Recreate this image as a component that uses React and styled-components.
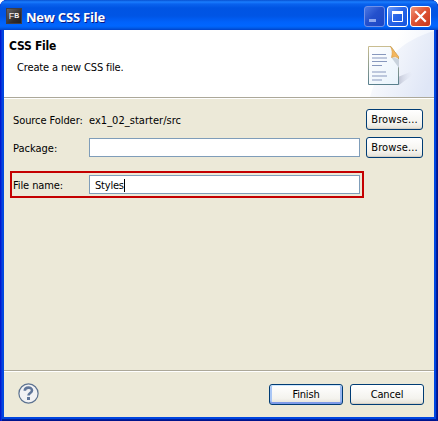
import React from "react";
import styled, { createGlobalStyle } from "styled-components";

const GlobalStyle = createGlobalStyle`
  * { box-sizing: border-box; }
  body { margin: 0; background: #fff; overflow: hidden; }
`;

const Window = styled.div`
  width: 438px;
  height: 421px;
  display: flex;
  flex-direction: column;
  padding: 0 4px 4px;
  border-radius: 7px 7px 0 0;
  overflow: hidden;
  background: #0046e0;
  box-shadow: inset 1px 0 #0019cf, inset 2px 0 #0831d9, inset -1px 0 #00138c,
    inset -2px 0 #001ea0, inset 0 -1px #00138c, inset 0 -2px #001ea0;
  font-family: "DejaVu Sans Condensed", "DejaVu Sans", sans-serif;
  font-stretch: condensed;
  font-size: 11px;
  line-height: 14px;
  color: #000;
`;

const TitleBar = styled.header`
  height: 30px;
  flex: none;
  margin: 0 -4px;
  padding: 3px 7px 0 6px;
  display: flex;
  align-items: center;
  background: linear-gradient(#0850d0 0, #1a7dff 2px, #0a62ee 4px, #0054e3 8px,
    #0055e5 16px, #0062fb 22px, #0066ff 26px, #005be8 28px, #0042c8 30px);
`;

const AppIcon = styled.span`
  width: 16px;
  height: 16px;
  margin-top: -2px;
  display: flex;
  align-items: center;
  justify-content: center;
  background: linear-gradient(135deg, #696565, #302c2c 65%, #242121);
  border: 1px solid #413d42;
  color: #f4f0f0;
  font: 9px/14px "Liberation Sans", sans-serif;

  small { font-size: 7px; font-weight: bold; padding-top: 1px; }
`;

const Title = styled.h1`
  flex: 1;
  margin: 0 0 0 4px;
  font: bold 13px/16px "Open Sans", sans-serif;
  letter-spacing: ${(p) => p.$spacing}px;
  color: #fff;
  text-shadow: 1px 1px #0a1883;
`;

const Controls = styled.div`
  display: flex;
  gap: 2px;
`;

const controlFills = {
  min: "linear-gradient(135deg, #4a78e4, #2450cc 45%, #1c46c4)",
  max: "linear-gradient(135deg, #6f9cf8, #2865e8 45%, #1654dd)",
  close: "linear-gradient(135deg, #f09578, #df5434 45%, #c8381c)",
};

const Control = styled.button`
  width: 21px;
  height: 21px;
  padding: 0;
  border: 1px solid ${(p) => (p.$kind === "min" ? "#6f90e8" : "#fff")};
  border-radius: 3px;
  background: ${(p) => controlFills[p.$kind]};

  svg { display: block; }
`;

const Banner = styled.section`
  height: 69px;
  flex: none;
  display: flex;
  justify-content: space-between;
  padding-left: 5px;
  background: #fff;
  border-bottom: 1px solid #fff;
  box-shadow: inset 0 -1px #aca899;
`;

const BannerText = styled.div`
  padding-top: 8px;
`;

const Heading = styled.h2`
  margin: 0;
  font-size: 12px;
  line-height: 16px;
  letter-spacing: ${(p) => p.$spacing}px;
`;

const Message = styled.p`
  margin: 7px 0 0 8px;
  letter-spacing: ${(p) => p.$spacing}px;
`;

const Form = styled.main`
  flex: 1;
  display: flex;
  flex-direction: column;
  padding: 10px 11px 0 6px;
  background: #ece9d8;
`;

const Row = styled.div`
  height: ${(p) => (p.$marked ? 27 : 21)}px;
  width: ${(p) => (p.$marked ? "354px" : "auto")};
  margin-bottom: ${(p) => p.$gap || 0}px;
  display: flex;
  align-items: center;
  border: ${(p) => (p.$marked ? "2px solid #c40000" : "0")};
  padding-left: ${(p) => (p.$marked ? 1 : 3)}px;
`;

const Label = styled.label`
  width: 76px;
  flex: none;
  padding-top: 3px;
  white-space: nowrap;
  letter-spacing: ${(p) => p.$spacing}px;
`;

const Value = styled.span`
  flex: 1;
  padding-top: 3px;
  letter-spacing: ${(p) => p.$spacing}px;
`;

const Field = styled.div`
  width: 271px;
  height: 19px;
  flex: none;
  display: flex;
  align-items: center;
  padding: 2px 0 0 5px;
  border: 1px solid #7f9db9;
  background: #fff;
  letter-spacing: ${(p) => p.$spacing || 0}px;
`;

const Caret = styled.i`
  width: 1px;
  height: 13px;
  margin-top: -1px;
  background: #000;
`;

const Button = styled.button`
  width: ${(p) => p.$width}px;
  height: 21px;
  flex: none;
  padding: 1px 0 0;
  margin-left: ${(p) => (p.$width < 60 ? 6 : 0)}px;
  border: 1px solid #003c74;
  border-radius: 3px;
  background: linear-gradient(#fff, #f4f3ee 70%, #e4e0d5);
  box-shadow: ${(p) =>
    p.$primary
      ? "inset 0 1px #cee7ff, inset 0 -2px #7f9be8, inset 2px 0 #a9c6f5, inset -2px 0 #9ab8f0"
      : "inset 0 -1px #d6d0c5"};
  color: #000;
  font: inherit;
  line-height: 18px;
  letter-spacing: ${(p) => p.$spacing}px;
`;

const Footer = styled.footer`
  height: 47px;
  flex: none;
  display: flex;
  align-items: center;
  gap: 7px;
  padding: 1px 10px 0 14px;
  border-top: 1px solid #aca899;
  box-shadow: inset 0 1px #fff;
  background: #ece9d8;
`;

const Help = styled.span`
  flex: 1;
  height: 23px;

  svg { display: block; }
`;

function ControlIcon({ kind }) {
  return (
    <svg width="19" height="19" viewBox="0 0 19 19" fill="none">
      {kind === "min" && <path d="M4 12h7v3H4z" fill="#8ea8ee" />}
      {kind === "max" && (
        <>
          <path d="M4.5 5.5h10v9h-10z" stroke="#fff" />
          <path d="M4 4h11v3H4z" fill="#fff" />
        </>
      )}
      {kind === "close" && (
        <path d="M5 5l9 9M14 5l-9 9" stroke="#fff" strokeWidth="2.2" strokeLinecap="square" />
      )}
    </svg>
  );
}

function DocumentArt() {
  return (
    <svg width="76" height="67" viewBox="0 0 76 67">
      <defs>
        <linearGradient id="swoosh" x1="0" y1="0.2" x2="1" y2="0.6">
          <stop offset="0" stopColor="#fff" />
          <stop offset="1" stopColor="#dfe6f6" />
        </linearGradient>
        <linearGradient id="sky" x1="0" y1="0" x2="1" y2="0.3">
          <stop offset="0.5" stopColor="#fff" />
          <stop offset="1" stopColor="#f0f4fc" />
        </linearGradient>
        <linearGradient id="paper" x1="0" y1="0" x2="1" y2="1">
          <stop offset="0" stopColor="#fff" />
          <stop offset="1" stopColor="#e8f3fc" />
        </linearGradient>
        <linearGradient id="edge" x1="0" y1="0" x2="0" y2="1">
          <stop offset="0" stopColor="#c9bd91" />
          <stop offset="1" stopColor="#587f8d" />
        </linearGradient>
        <linearGradient id="shade">
          <stop offset="0" stopColor="#bfc3d3" />
          <stop offset="1" stopColor="#dfe5f4" stopOpacity="0" />
        </linearGradient>
      </defs>
      <path d="M0 0h76v67H0z" fill="url(#sky)" />
      <path d="M12 67C22 30 45 10 76 1v66z" fill="url(#swoosh)" />
      <path d="M40 55V47l12-5q6 1 0 5l-11 8z" fill="url(#shade)" />
      <path d="M10.500 16.500H33l7.500 11v27h-30z" fill="url(#paper)" stroke="url(#edge)" />
      <path d="M33 27l8 2v9z" fill="#c9d3dd" />
      <path d="M32.500 16.500l8 10v2c-2-2-4-2-7-1 1-4 1-8-1-11z" fill="#f3b65e" stroke="#d89a42" strokeWidth=".6" />
      <path d="M14 24.500h14M14 28h15M14 31.500h15M14 35.500h10M14 42h14M14 46h15M14 50h10" stroke="#8798bd" strokeWidth="1.200" />
    </svg>
  );
}

export default function App() {
  return (
    <>
      <GlobalStyle />
      <Window>
        <TitleBar>
          <AppIcon>F<small>B</small></AppIcon>
          <Title $spacing={-0.22}>New CSS File</Title>
          <Controls>
            {["min", "max", "close"].map((kind) => (
              <Control key={kind} $kind={kind} aria-label={kind}>
                <ControlIcon kind={kind} />
              </Control>
            ))}
          </Controls>
        </TitleBar>
        <Banner>
          <BannerText>
            <Heading $spacing={-0.25}>CSS File</Heading>
            <Message $spacing={-0.14}>Create a new CSS file.</Message>
          </BannerText>
          <DocumentArt />
        </Banner>
        <Form>
          <Row $gap={7}>
            <Label $spacing={-0.08}>Source Folder:</Label>
            <Value $spacing={0.03}>ex1_02_starter/src</Value>
            <Button $width={57} $spacing={0.12}>Browse...</Button>
          </Row>
          <Row $gap={13}>
            <Label $spacing={0}>Package:</Label>
            <Field />
            <Button $width={57} $spacing={0.12}>Browse...</Button>
          </Row>
          <Row $marked>
            <Label $spacing={-0.1}>File name:</Label>
            <Field $spacing={-0.2}>Styles<Caret /></Field>
          </Row>
        </Form>
        <Footer>
          <Help>
            <svg width="21" height="21" viewBox="0 0 21 21" fill="none">
              <circle cx="10.500" cy="10.500" r="9.600" fill="#f2f2f4" stroke="#5c7290" strokeWidth="1.200" />
              <path d="M6.800 7.800C6.800 3.800 14 3.500 14 7.500c0 2.500-3.500 2.500-3.500 5" stroke="#60769a" strokeWidth="2.600" />
              <path d="M9 14h3v3H9z" fill="#60769a" />
            </svg>
          </Help>
          <Button $width={74} $spacing={-0.15} $primary>Finish</Button>
          <Button $width={74} $spacing={-0.15}>Cancel</Button>
        </Footer>
      </Window>
    </>
  );
}
